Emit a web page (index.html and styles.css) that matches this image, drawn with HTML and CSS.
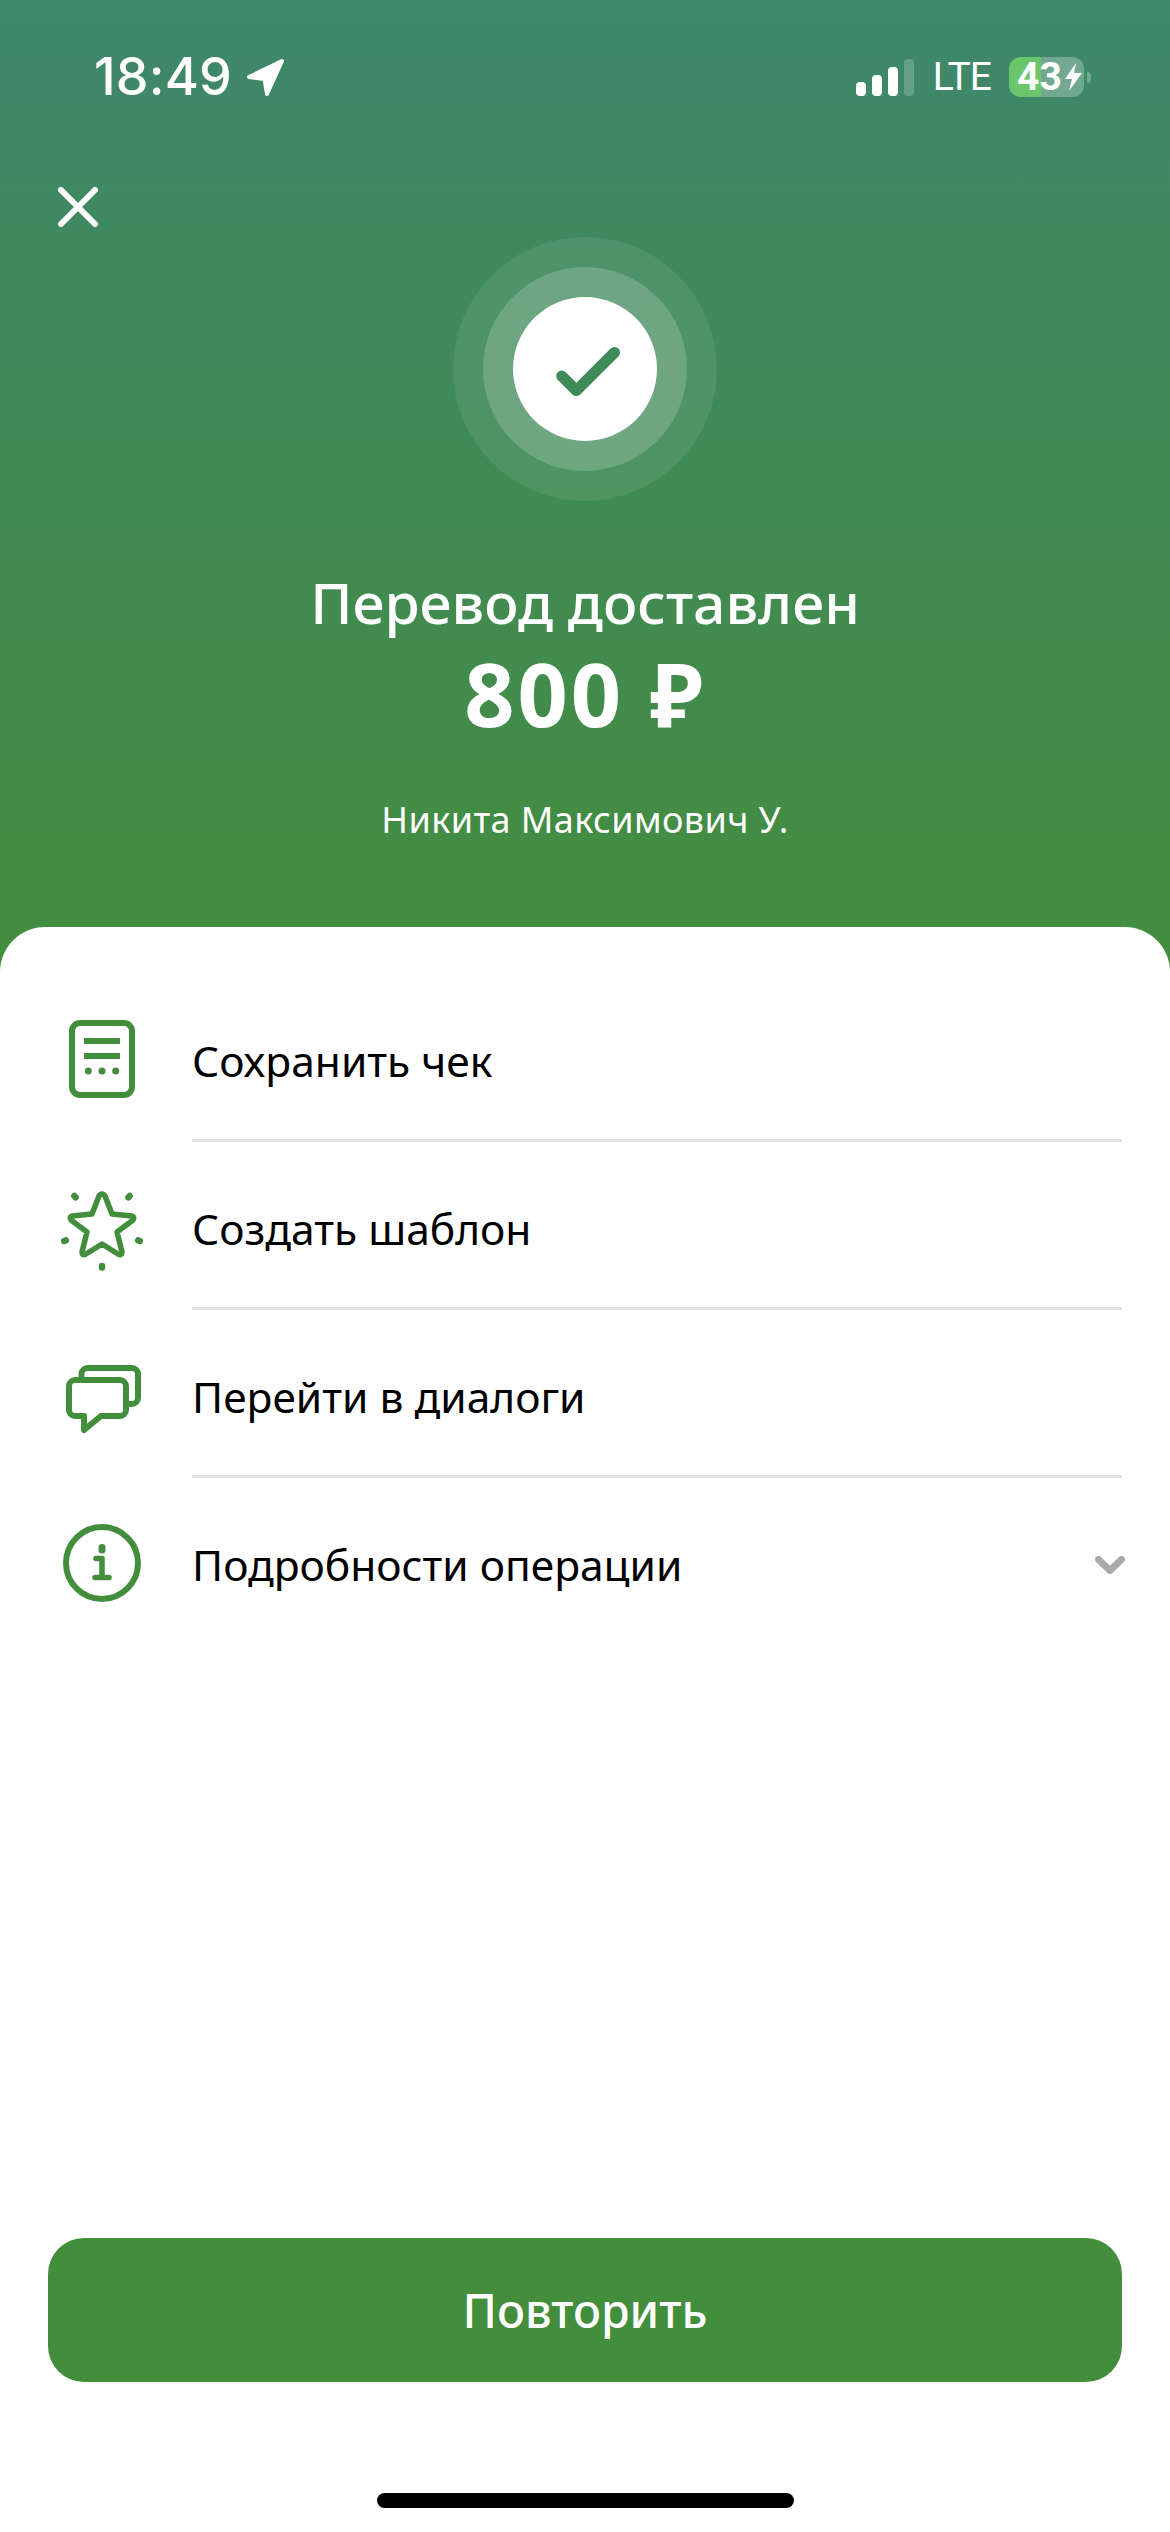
FILE: index.html
```html
<!doctype html>
<html lang="ru">
<head>
  <meta charset="UTF-8">
  <title>Перевод доставлен</title>
  <link rel="stylesheet" href="styles.css">
</head>
<body>
  <div class="screen">
    <div class="status">
      <div class="status-left">
        <span class="time">18:49</span>
        <svg class="nav-arrow" width="40" height="40" viewBox="0 0 40 40"><path d="M36 4 L3 20 L18.5 22 L21 37 Z" fill="#fff" stroke="#fff" stroke-width="4" stroke-linejoin="round"/></svg>
      </div>
      <div class="status-right">
        <svg class="signal" width="58" height="37" viewBox="0 0 58 37">
          <rect x="0" y="23" width="10" height="14" rx="4" fill="#fff"/>
          <rect x="16" y="16" width="10" height="21" rx="4" fill="#fff"/>
          <rect x="32" y="8" width="10" height="29" rx="4" fill="#fff"/>
          <rect x="48" y="0" width="10" height="37" rx="4" fill="#fff" fill-opacity=".2"/>
        </svg>
        <span class="lte">LTE</span>
        <div class="battery">
          <span class="battery-num">43</span>
          <svg width="17" height="28" viewBox="0 0 17 28"><path d="M11 0 L0 16 H7 L4 28 L17 10 H9 Z" fill="#fff"/></svg>
        </div>
        <span class="battery-tip"></span>
      </div>
    </div>

    <div class="hero">
      <button class="close">
        <svg width="40" height="40" viewBox="0 0 40 40"><path d="M3 3 L37 37 M37 3 L3 37" stroke="#fff" stroke-width="6" stroke-linecap="round"/></svg>
      </button>
      <div class="ring-outer">
        <div class="ring-mid">
          <div class="ring-inner">
            <svg width="70" height="70" viewBox="0 0 70 70"><path d="M11.7 42 L26.3 56.6 L64.5 18.5" fill="none" stroke="#3e8a58" stroke-width="11" stroke-linecap="round" stroke-linejoin="round"/></svg>
          </div>
        </div>
      </div>
    </div>

    <div class="title">Перевод доставлен</div>
    <div class="amount">800 ₽</div>
    <div class="name">Никита Максимович У.</div>

    <div class="sheet">
      <ul class="actions">
        <li class="row">
          <svg class="icon" width="96" height="96" viewBox="0 0 96 96">
            <rect x="18" y="13" width="60" height="72" rx="8" fill="none" stroke="#438e3c" stroke-width="6"/>
            <path d="M30 31 H66 M30 46 H66" stroke="#438e3c" stroke-width="6"/>
            <circle cx="34.3" cy="61" r="3.5" fill="#438e3c"/>
            <circle cx="48" cy="61" r="3.5" fill="#438e3c"/>
            <circle cx="61.7" cy="61" r="3.5" fill="#438e3c"/>
          </svg>
          <div class="row-body"><span class="row-text">Сохранить чек</span></div>
        </li>
        <li class="row">
          <svg class="icon" width="96" height="96" viewBox="0 0 96 96">
            <path d="M48 16 Q50 16 51 18 L58 36 L78 38 Q81 39 79 42 L63 54 L68 74 Q68 78 64 76 L48 66 L32 76 Q28 78 28 74 L33 54 L17 42 Q15 39 18 38 L38 36 L45 18 Q46 16 48 16 Z" fill="none" stroke="#438e3c" stroke-width="5.5" stroke-linejoin="round"/>
            <path d="M20.4 18 L21.6 19.4 M75.6 18 L74.4 19.4 M10.2 63 L11.8 62.4 M85.8 63 L84.2 62.4 M48 88 V89.5" stroke="#438e3c" stroke-width="6.5" stroke-linecap="round"/>
          </svg>
          <div class="row-body"><span class="row-text">Создать шаблон</span></div>
        </li>
        <li class="row">
          <svg class="icon" width="96" height="96" viewBox="0 0 96 96">
            <path d="M21 34 H66 a6 6 0 0 1 6 6 V64 a6 6 0 0 1 -6 6 H47 L30 84 V70 H21 a6 6 0 0 1 -6 -6 V40 a6 6 0 0 1 6 -6 Z" fill="none" stroke="#438e3c" stroke-width="6" stroke-linejoin="round"/>
            <path d="M27.5 33 V28 a6 6 0 0 1 6 -6 H78 a6 6 0 0 1 6 6 V52 a6 6 0 0 1 -6 6 H73" fill="none" stroke="#438e3c" stroke-width="6"/>
          </svg>
          <div class="row-body"><span class="row-text">Перейти в диалоги</span></div>
        </li>
        <li class="row row-last">
          <svg class="icon" width="96" height="96" viewBox="0 0 96 96">
            <circle cx="48" cy="49" r="36" fill="none" stroke="#438e3c" stroke-width="6"/>
            <path d="M48 33.5 V36" stroke="#438e3c" stroke-width="7" stroke-linecap="round"/>
            <path d="M42 44.5 H48 V63.5 M41 63.5 H55" fill="none" stroke="#438e3c" stroke-width="5.5" stroke-linecap="round" stroke-linejoin="round"/>
          </svg>
          <div class="row-body">
            <span class="row-text">Подробности операции</span>
            <svg class="chevron" width="30" height="18" viewBox="0 0 30 18"><path d="M3.5 3.5 L15 14.5 L26.5 3.5" fill="none" stroke="#aaaaaa" stroke-width="7" stroke-linecap="round" stroke-linejoin="round"/></svg>
          </div>
        </li>
      </ul>

      <button class="repeat">Повторить</button>
      <div class="home-bar"></div>
    </div>
  </div>
</body>
</html>
```

FILE: styles.css
```css
* {
  box-sizing: border-box;
}

body, ul, li {
  margin: 0;
  padding: 0;
}

ul, li {
  list-style: none;
}

body {
  font-family: "Noto Sans", "Open Sans", sans-serif;
  background: #fff;
}

.screen {
  width: 1170px;
  height: 2532px;
  display: flex;
  flex-direction: column;
  overflow: hidden;
  background: linear-gradient(#3e886c 0, #438d3e 972px, #438d3e 100%);
  color: #fff;
}

/* status bar */
.status {
  height: 97px;
  padding: 57px 79px 0 94px;
  display: flex;
  justify-content: space-between;
  align-items: flex-start;
  flex-shrink: 0;
}

.status-left {
  display: flex;
  align-items: center;
  gap: 14px;
  height: 40px;
}

.time {
  font-family: Inter, Roboto, sans-serif;
  font-size: 52px;
  line-height: 40px;
  font-weight: 500;
  letter-spacing: 0.2px;
}

.status-right {
  display: flex;
  align-items: center;
  height: 40px;
}

.signal {
  margin-right: 19px;
}

.lte {
  font-family: Roboto, sans-serif;
  font-size: 39px;
  line-height: 40px;
  letter-spacing: -1px;
  margin-right: 18px;
}

.battery {
  width: 75px;
  height: 40px;
  border-radius: 12px;
  padding-left: 8px;
  display: flex;
  align-items: center;
  gap: 3px;
  background: linear-gradient(to right, #69c66b 32px, rgba(255, 255, 255, 0.27) 32px);
}

.battery-num {
  font-family: Roboto, sans-serif;
  font-size: 39px;
  line-height: 40px;
  font-weight: 700;
}

.battery-tip {
  width: 4px;
  height: 11px;
  margin-left: 3px;
  border-radius: 0 6px 6px 0;
  background: rgba(255, 255, 255, 0.27);
}

/* top part with the rings */
.hero {
  display: grid;
  grid-template-columns: 1fr 264px 1fr;
  margin-top: 90px;
  flex-shrink: 0;
}

.close {
  width: 40px;
  height: 40px;
  margin-left: 58px;
  padding: 0;
  border: 0;
  background: none;
  display: block;
}

.ring-outer, .ring-mid, .ring-inner {
  display: flex;
  align-items: center;
  justify-content: center;
  border-radius: 50%;
}

.ring-outer {
  width: 264px;
  height: 264px;
  margin-top: 50px;
  background: rgba(255, 255, 255, 0.08);
}

.ring-mid {
  width: 204px;
  height: 204px;
  background: rgba(255, 255, 255, 0.175);
}

.ring-inner {
  width: 144px;
  height: 144px;
  background: #fff;
}

.title {
  margin-top: 64px;
  text-align: center;
  font-size: 57px;
  line-height: 74px;
  font-weight: 500;
}

.amount {
  margin-top: 7px;
  text-align: center;
  font-size: 88px;
  line-height: 94px;
  font-weight: 700;
  letter-spacing: 3px;
}

.name {
  margin-top: 56px;
  text-align: center;
  font-size: 36px;
  line-height: 48px;
  letter-spacing: 0.4px;
}

/* white sheet */
.sheet {
  flex: 1;
  margin-top: 83px;
  padding-top: 47px;
  display: flex;
  flex-direction: column;
  background: #fff;
  border-radius: 45px 45px 0 0;
  color: #000;
}

.actions {
  padding: 0 48px 0 54px;
}

.row {
  height: 168px;
  display: flex;
  align-items: center;
}

.icon {
  flex-shrink: 0;
  margin-right: 42px;
}

.row-body {
  flex: 1;
  height: 168px;
  display: flex;
  align-items: center;
  justify-content: space-between;
  border-bottom: 3px solid #e2e2e2;
}

.row-last .row-body {
  border-bottom-color: transparent;
}

.row-text {
  font-size: 42.5px;
  line-height: 56px;
  margin-top: 8px;
}

.chevron {
  margin-right: -3px;
  margin-top: 8px;
}

.repeat {
  display: block;
  height: 144px;
  margin: auto 48px 0;
  border: 0;
  border-radius: 36px;
  background: #438e3c;
  color: #fff;
  font-family: inherit;
  font-size: 46.5px;
  font-weight: 500;
}

.home-bar {
  width: 417px;
  height: 15px;
  margin: 111px auto 24px;
  border-radius: 8px;
  background: #000;
}
```
